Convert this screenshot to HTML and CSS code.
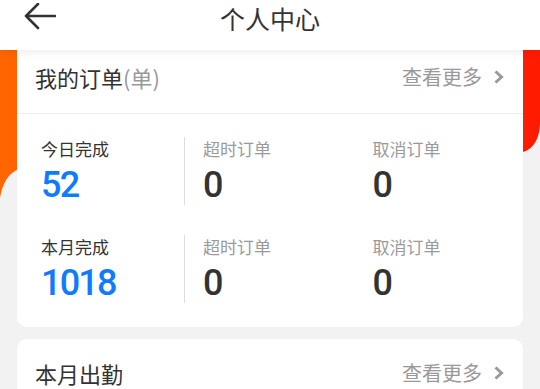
FILE: index.html
```html
<!DOCTYPE html>
<html lang="zh-CN">
<head>
  <meta charset="UTF-8">
  <meta name="viewport" content="width=device-width, initial-scale=1.0">
  <title>个人中心</title>
  <link rel="stylesheet" href="styles.css">
</head>
<body>
  <header class="topbar">
    <button class="back" type="button" aria-label="返回">
      <svg width="32" height="28" viewBox="0 0 32 28">
        <path d="M2 13 H31 M14 1 L2 13 L14 25" fill="none" stroke="#333" stroke-width="2.6" stroke-linecap="round" stroke-linejoin="round"/>
      </svg>
    </button>
    <h1 class="title">个人中心</h1>
  </header>

  <main class="page">
    <!-- orange banner behind the first card -->
    <svg class="banner" width="540" height="160" viewBox="0 0 540 160">
      <defs>
        <linearGradient id="bannerGrad" x1="0" y1="0" x2="1" y2="0">
          <stop offset="0" stop-color="#ff6600"/>
          <stop offset="1" stop-color="#ff1a00"/>
        </linearGradient>
      </defs>
      <path d="M0 0 H540 V81 C540 99 532 111 518 112 L20 128 C8 131 2 144 0 157 Z" fill="url(#bannerGrad)"/>
    </svg>

    <section class="card">
      <div class="card-head">
        <h2 class="card-title">我的订单<span class="unit">(单)</span></h2>
        <a class="more" href="#">查看更多
          <svg width="11" height="16" viewBox="0 0 11 16">
            <path d="M2.5 2.5 L8.5 8 L2.5 13.5" fill="none" stroke="#999" stroke-width="3"/>
          </svg>
        </a>
      </div>
      <div class="stats">
        <div class="stat-row">
          <div class="stat">
            <p class="label">今日完成</p>
            <p class="value blue">52</p>
          </div>
          <div class="stat">
            <p class="label muted">超时订单</p>
            <p class="value">0</p>
          </div>
          <div class="stat">
            <p class="label muted">取消订单</p>
            <p class="value">0</p>
          </div>
        </div>
        <div class="stat-row">
          <div class="stat">
            <p class="label">本月完成</p>
            <p class="value blue">1018</p>
          </div>
          <div class="stat">
            <p class="label muted">超时订单</p>
            <p class="value">0</p>
          </div>
          <div class="stat">
            <p class="label muted">取消订单</p>
            <p class="value">0</p>
          </div>
        </div>
      </div>
    </section>

    <section class="card card-tall">
      <div class="card-head">
        <h2 class="card-title">本月出勤</h2>
        <a class="more" href="#">查看更多
          <svg width="11" height="16" viewBox="0 0 11 16">
            <path d="M2.5 2.5 L8.5 8 L2.5 13.5" fill="none" stroke="#999" stroke-width="3"/>
          </svg>
        </a>
      </div>
    </section>
  </main>
</body>
</html>
```

FILE: styles.css
```css
* {
  padding: 0;
  margin: 0;
  box-sizing: border-box;
}

body {
  width: 540px;
  height: 389px;
  overflow: hidden;
  background-color: #f2f2f2;
  font-family: "Noto Sans CJK SC", "Noto Sans", sans-serif;
  color: #333;
}

.topbar {
  position: relative;
  z-index: 2;
  height: 50px;
  background-color: #fff;
  box-shadow: 0 2px 8px rgba(0, 0, 0, 0.08);
  display: flex;
  align-items: flex-start;
  justify-content: center;
}

.back {
  position: absolute;
  left: 24px;
  top: 3px;
  border: none;
  background: transparent;
  display: flex;
}

.title {
  font-size: 25px;
  font-weight: 400;
  line-height: 36px;
  color: #333;
}

.page {
  position: relative;
  margin-top: -9px;
  padding: 0 17px;
  display: flex;
  flex-direction: column;
  gap: 12px;
}

.banner {
  position: absolute;
  left: 0;
  top: 0;
  z-index: 0;
}

.card {
  position: relative;
  z-index: 1;
  background-color: #fff;
  border-radius: 10px;
}

.card-tall {
  min-height: 120px;
}

.card-head {
  height: 73px;
  padding: 0 19px 0 18px;
  display: flex;
  align-items: center;
  justify-content: space-between;
  border-bottom: 1px solid #eee;
}

.card-tall .card-head {
  padding-bottom: 5px;
}

.card-title {
  font-size: 22px;
  line-height: 26px;
  font-weight: 400;
  color: #333;
}

.card-title .unit {
  color: #999;
}

.more {
  display: flex;
  align-items: center;
  gap: 11px;
  font-size: 20px;
  line-height: 24px;
  color: #999;
  text-decoration: none;
}

.stats {
  padding: 23px 0 24px;
  display: flex;
  flex-direction: column;
  gap: 30px;
}

.stat-row {
  display: grid;
  grid-template-columns: 167px 1fr 1fr;
}

.stat {
  height: 68px;
  padding-left: 19px;
}

.stat:first-child {
  padding-left: 24px;
}

.stat:nth-child(2) {
  padding-left: 18px;
  border-left: 1px solid #ddd;
}

.label {
  font-size: 17px;
  line-height: 24px;
  color: #333;
}

.label.muted {
  color: #9a9a9a;
}

.value {
  margin-top: 4px;
  font-family: Roboto, "Noto Sans", sans-serif;
  font-weight: 500;
  font-size: 36px;
  line-height: 40px;
  letter-spacing: -1.8px;
  color: #333;
}

.value.blue {
  color: #0f7bff;
}
```
